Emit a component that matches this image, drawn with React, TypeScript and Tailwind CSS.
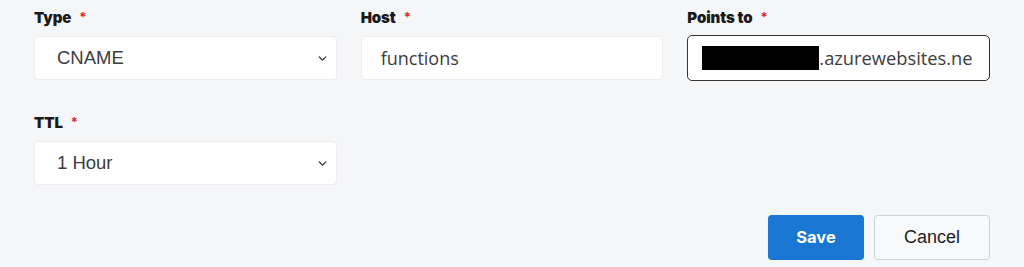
import { ChevronDown } from 'lucide-react'

const labelFont = { fontFamily: '"Inter", "Noto Sans", sans-serif' }

function Label({ text }: { text: string }) {
  return (
    <label className="flex items-center h-[18px] mb-[9px] text-[15px] font-black text-[#1a1a1a] tracking-[-0.1px]">
      {text}
      <span className="ml-[8px] text-[#d32f2f] text-[13px] font-bold">*</span>
    </label>
  )
}

function SelectBox({ value }: { value: string }) {
  return (
    <div className="flex items-center justify-between h-[44px] bg-white border border-[#ececee] rounded-[4px] pl-[22px] pr-[7px]">
      <span className="text-[18.5px] text-[#3c3c3c]" style={{ fontFamily: '"Liberation Sans", Arial, sans-serif' }}>{value}</span>
      <ChevronDown size={13} strokeWidth={2.5} className="text-[#333]" />
    </div>
  )
}

export default function App() {
  return (
    <div className="w-[1024px] h-[267px] bg-[#f5f6f8] px-[34px] pt-[9px]" style={labelFont}>
      <div className="grid grid-cols-3 gap-x-[24px]">
        <div>
          <Label text="Type" />
          <SelectBox value="CNAME" />
        </div>
        <div>
          <Label text="Host" />
          <div className="flex items-center h-[44px] bg-white border border-[#ececee] rounded-[4px] pl-[19px]">
            <span className="text-[18px] text-[#3c3c3c]" style={{ fontFamily: '"Open Sans", sans-serif' }}>functions</span>
          </div>
        </div>
        <div>
          <Label text="Points to" />
          <div className="flex items-center h-[46px] -mt-[1px] bg-white border border-[#333] rounded-[5px] pl-[14px] overflow-hidden">
            <span className="w-[117px] h-[24px] bg-black shrink-0" />
            <span className="text-[18.3px] text-[#3c3c3c] whitespace-nowrap" style={{ fontFamily: '"Open Sans", sans-serif' }}>.azurewebsites.ne</span>
          </div>
        </div>
      </div>
      <div className="grid grid-cols-3 gap-x-[24px] mt-[33px]">
        <div>
          <Label text="TTL" />
          <SelectBox value="1 Hour" />
        </div>
      </div>
      <div className="flex justify-end gap-[10px] mt-[30px]">
        <button className="w-[96px] h-[45px] rounded-[4px] bg-[#1976d2] text-white text-[16.5px] font-bold">Save</button>
        <button className="w-[116px] h-[45px] rounded-[4px] bg-[#f8f9fa] border border-[#cfd2d6] text-[#222] text-[18px]" style={{ fontFamily: '"Liberation Sans", Arial, sans-serif' }}>Cancel</button>
      </div>
    </div>
  )
}
